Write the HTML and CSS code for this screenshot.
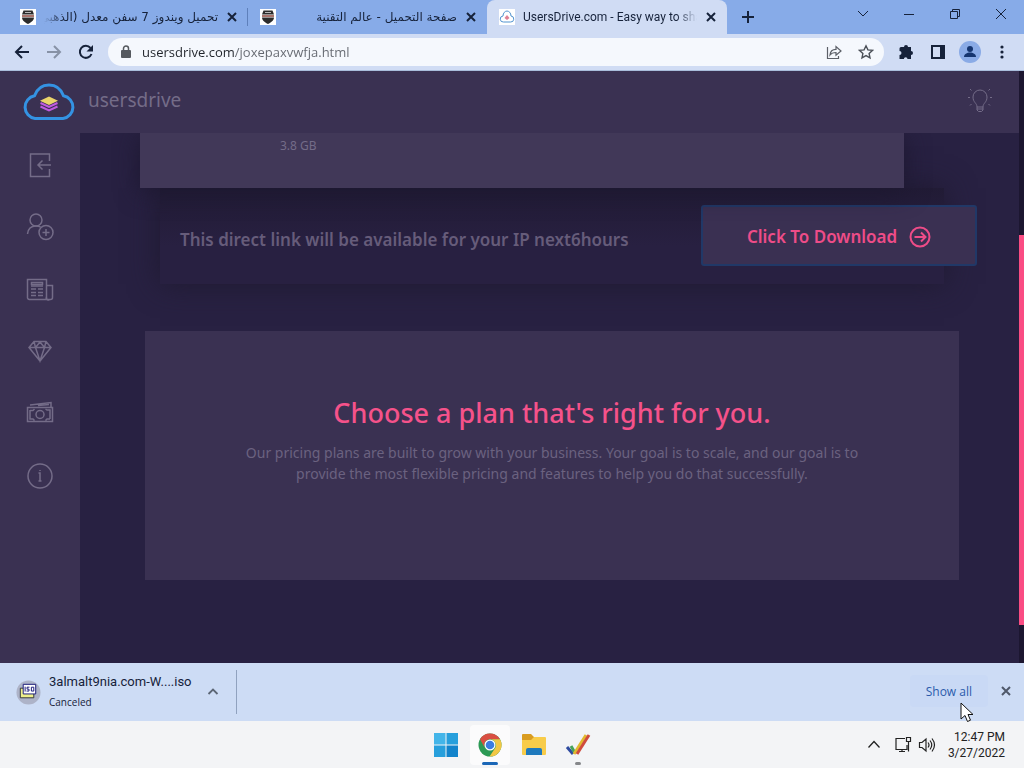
FILE: index.html
```html
<!DOCTYPE html>
<html lang="en">
<head>
<meta charset="utf-8">
<meta name="viewport" content="width=device-width, initial-scale=1">
<title>UsersDrive.com - Easy way to share</title>
<link rel="stylesheet" href="styles.css">
</head>
<body>
<svg class="defs" aria-hidden="true">
  <symbol id="badge" viewBox="0 0 16 16"><path fill="#fff" d="M0 0h16v16H0z"/><path fill="#2c2c2c" d="M3.500 1.500h9l1.500 4H2zM2 8.500h12c0 3-3 5-6 6.500-3-1.500-6-3.500-6-6.500z"/><path fill="#a8736c" d="M2 6h12v2H2z"/><path stroke="#b8b8b8" d="M5 3.500h6"/></symbol>
  <symbol id="cross" viewBox="0 0 12 12"><path fill="none" stroke="currentColor" stroke-width="2" d="m2 2 8 8M10 2l-8 8"/></symbol>
</svg>

<div class="tabstrip">
  <div class="tab">
    <svg class="i16"><use href="#badge"/></svg>
    <span class="tab-title rtl" dir="rtl" lang="ar">تحميل ويندوز 7 سفن معدل (الذهبي</span>
    <button class="plain" aria-label="Close tab"><svg class="i12"><use href="#cross"/></svg></button>
  </div>
  <div class="tab ruled">
    <svg class="i16"><use href="#badge"/></svg>
    <span class="tab-title rtl" dir="rtl" lang="ar">صفحة التحميل - عالم التقنية</span>
    <button class="plain" aria-label="Close tab"><svg class="i12"><use href="#cross"/></svg></button>
  </div>
  <div class="tab active">
    <svg class="i16" viewBox="0 0 16 16"><path fill="#fff" d="M0 0h16v16H0z"/><path fill="none" stroke="#5193cf" d="M4.500 13a3 3 0 0 1-.5-6c0-3 2-5 4-5s4 2 4 5a3 3 0 0 1-.5 6z"/><path fill="#df8195" d="m8 6 2.500 3L8 11 5.500 9z"/></svg>
    <span class="tab-title">UsersDrive.com - Easy way to sha</span>
    <button class="plain" aria-label="Close tab"><svg class="i12"><use href="#cross"/></svg></button>
  </div>
  <button class="plain new-tab" aria-label="New tab"><svg class="i12" viewBox="0 0 12 12"><path stroke="currentColor" stroke-width="2" d="M6 0v12M0 6h12"/></svg></button>
  <div class="window-buttons">
    <button class="plain" aria-label="Search tabs"><svg class="i12" viewBox="0 0 12 12"><path fill="none" stroke="currentColor" d="m1 3 5 5 5-5"/></svg></button>
    <button class="plain" aria-label="Minimize"><svg class="i12" viewBox="0 0 12 12"><path stroke="currentColor" d="M1 6.500h10"/></svg></button>
    <button class="plain" aria-label="Restore"><svg class="i12" viewBox="0 0 12 12"><path fill="none" stroke="currentColor" d="M1.500 3.500h7v7h-7zM3.500 3.500v-2h7v7h-2"/></svg></button>
    <button class="plain" aria-label="Close"><svg class="i12" viewBox="0 0 12 12"><path stroke="currentColor" d="m1 1 10 10M11 1 1 11"/></svg></button>
  </div>
</div>

<div class="toolbar">
  <button class="plain" aria-label="Back"><svg class="i16" viewBox="0 0 16 16"><path fill="none" stroke="currentColor" stroke-width="2" d="M15 8H2M8 2 2 8l6 6"/></svg></button>
  <button class="plain faded" aria-label="Forward"><svg class="i16" viewBox="0 0 16 16"><path fill="none" stroke="currentColor" stroke-width="2" d="M1 8h13M8 2l6 6-6 6"/></svg></button>
  <button class="plain" aria-label="Reload"><svg class="i16" viewBox="0 0 16 16"><path fill="none" stroke="currentColor" stroke-width="2" d="M13.500 10A6 6 0 1 1 12.500 4"/><path fill="currentColor" d="M15 1v6.500H8.500z"/></svg></button>
  <div class="omnibox">
    <svg class="lock" viewBox="0 0 10 14"><path fill="#55595f" d="M1 5h8a1 1 0 0 1 1 1v6a1 1 0 0 1-1 1H1a1 1 0 0 1-1-1V6a1 1 0 0 1 1-1z"/><path fill="none" stroke="#55595f" stroke-width="1.500" d="M2.500 6V3.500a2.500 2.500 0 0 1 5 0V6"/></svg>
    <input class="address" type="text" aria-label="Address" value="usersdrive.com/joxepaxvwfja.html">
    <button class="plain" aria-label="Share"><svg class="i16" viewBox="0 0 16 16"><path fill="none" stroke="#5c6068" stroke-width="1.200" d="M1.500 3v11.500h11V12M4 11c.3-4 2.500-5.700 6-5.700V2.500L15 7l-5 4.300V8.500C7.500 8.500 5.500 9 4 11z"/></svg></button>
    <button class="plain" aria-label="Bookmark"><svg class="i16" viewBox="0 0 16 16"><path fill="none" stroke="#4b5058" stroke-width="1.400" d="m8 1.800 1.900 4.100 4.500.5-3.300 3 .9 4.400L8 11.600l-4 2.200.9-4.400-3.300-3 4.500-.5z"/></svg></button>
  </div>
  <div class="actions">
    <button class="plain" aria-label="Extensions"><svg class="i16" viewBox="0 0 16 16"><path fill="currentColor" d="M3 3h3a2 2 0 1 1 4 0h3v4a2 2 0 1 1 0 4v4H9.500a1.800 1.800 0 1 0-3.600 0H1.500v-4a2 2 0 1 0 0-4V4.500A1.500 1.500 0 0 1 3 3z"/></svg></button>
    <button class="plain" aria-label="Side panel"><svg class="i16" viewBox="0 0 16 16"><path fill="currentColor" d="M1 1h14v14H1zM3 3v10h7V3z" fill-rule="evenodd"/></svg></button>
    <button class="plain avatar" aria-label="Profile"><svg class="i16" viewBox="0 0 16 16"><circle cx="8" cy="5" r="3"/><path d="M2 13c0-3 3-4.500 6-4.500s6 1.500 6 4.500z"/></svg></button>
    <button class="plain" aria-label="Menu"><svg class="i16" viewBox="0 0 16 16"><circle cx="8" cy="3" r="1.600"/><circle cx="8" cy="8" r="1.600"/><circle cx="8" cy="13" r="1.600"/></svg></button>
  </div>
</div>

<div class="viewport">
  <div class="site">
    <header class="site-header">
      <a class="brand" href="#">
        <svg class="logo" viewBox="0 0 54 38"><path fill="none" stroke="#3493e3" stroke-width="3" d="M13 35.500A11.500 11.500 0 0 1 12.500 12.800C15 6 20 2 27 2s12 4 14.500 10.800A11.500 11.500 0 0 1 41 35.500z"/><path fill="#ead46a" d="m27 13.500 9 4.200-9 4.300-9-4.300z"/><path fill="none" stroke="#c05be0" stroke-width="2" d="m18.500 20 8.500 4 8.500-4M18.500 23.500l8.500 4 8.500-4"/></svg>
        <span>usersdrive</span>
      </a>
      <button class="plain bulb" aria-label="Switch theme"><svg viewBox="0 0 26 26"><path d="M10 20c0-4-4-4.500-4-10a7 7 0 0 1 14 0c0 5.500-4 6-4 10zM10 20v3l1.500 1.500h3L16 23v-3M10 22h6M1 10.500h2M23 10.500h2M3 2l1.500 1.500M23 2l-1.500 1.500M3 18.500 4.500 17M23 18.500 21.500 17"/></svg></button>
    </header>
    <nav class="sidebar">
      <a href="#" aria-label="Login"><svg viewBox="0 0 28 28"><path d="M23.500 10V3h-19v22.500h19V18M25 14H12M16.500 9.500 12 14l4.500 4.500"/></svg></a>
      <a href="#" aria-label="Register"><svg viewBox="0 0 28 28"><circle cx="10" cy="7" r="6"/><path d="M1.500 21c.5-5 3-8 8.500-8 2 0 3.500.4 4.500 1M20 16v7M16.500 19.500h7"/><circle cx="20" cy="19.500" r="7"/></svg></a>
      <a href="#" aria-label="News"><svg viewBox="0 0 28 28"><path d="M20.500 24V4.500h-19V22a2 2 0 0 0 2 2.500h21a2 2 0 0 0 2-2V10.500h-6M5 11h12M5 14h5M12 14h5M5 17.500h5M12 17.500h5M5 20.500h5M12 20.500h5"/><path d="M5.500 7.500h11v2h-11zM20.500 22a2 2 0 0 0 3 2.500"/></svg></a>
      <a href="#" aria-label="Premium"><svg viewBox="0 0 28 28"><path d="M8 4.500h12l5 6L14 24 3 10.500zM3 10.500h22M8 4.500l1.500 6L14 24l4.500-13.500 1.500-6M9.500 10.500 14 5l4.500 5.500"/></svg></a>
      <a href="#" aria-label="Make money"><svg viewBox="0 0 28 28"><path d="M1.500 8.500h25v14h-25zM4 11.500h3L8.500 10M4 11v9h3l1.500 1.500M24 20h-3l-1.500 1.500M24 20v-9h-3L19.500 10M4 6l21-2.500v5M12 6.500l11-1"/><circle cx="14" cy="15.500" r="4"/></svg></a>
      <a href="#" aria-label="About"><svg viewBox="0 0 28 28"><circle cx="14" cy="15" r="12"/><path d="M12.500 12H14v8M12.500 20h3M14 9v1"/></svg></a>
    </nav>
    <main class="content">
      <section class="file-card"><p>3.8 GB</p></section>
      <section class="link-card">
        <p>This direct link will be available for your IP next6hours</p>
        <a class="download" href="#">Click To Download
          <svg viewBox="0 0 22 22"><circle cx="11" cy="11" r="9.500"/><path d="M5.500 11h11M12 6.500l4.500 4.500-4.500 4.500"/></svg>
        </a>
      </section>
      <section class="plans">
        <h1>Choose a plan that's right for you.</h1>
        <p>Our pricing plans are built to grow with your business. Your goal is to scale, and our goal is to provide the most flexible pricing and features to help you do that successfully.</p>
      </section>
    </main>
  </div>
  <div class="scroll-track"><div class="scroll-thumb"></div></div>
</div>

<div class="downloads">
  <div class="download-item">
    <svg class="iso" viewBox="0 0 26 26"><circle cx="13" cy="13" r="12.500" fill="#adb3c8"/><path fill="#eef08a" stroke="#33363a" d="M4.500 8.500h14v10h-14z"/><path fill="#fff" stroke="#181879" d="M7.500 4.500h13v10h-13z"/><path fill="none" stroke="#181879" d="M9.500 7v5M14 7.500h-2.500v2h2v2H11M16 7.500h2.500v4H16z"/></svg>
    <div class="file"><div class="file-name">3almalt9nia.com-W....iso</div><div class="file-state">Canceled</div></div>
    <button class="plain" aria-label="Download options"><svg class="i12" viewBox="0 0 12 12"><path fill="none" stroke="#5c6675" stroke-width="1.800" d="m1.500 8 4.500-4.500L10.500 8"/></svg></button>
  </div>
  <div class="download-tools">
    <button class="show-all">Show all
      <svg class="cursor" viewBox="0 0 14 21"><path fill="#fff" stroke="#111" d="M1 1v16l4-3.500 2.500 6 3-1.300-2.500-5.700h5z"/></svg>
    </button>
    <button class="plain dismiss" aria-label="Close downloads bar"><svg class="i12"><use href="#cross"/></svg></button>
  </div>
</div>

<div class="taskbar">
  <span></span>
  <div class="apps">
    <button class="app" aria-label="Start"><svg viewBox="0 0 26 26"><path fill="#43b5e9" d="M1 1h11.500v11.500H1z"/><path fill="#279fdc" d="M13.500 1H25v11.500H13.500zM1 13.500h11.500V25H1z"/><path fill="#1283cb" d="M13.500 13.500H25V25H13.500z"/></svg></button>
    <button class="app current" aria-label="Chrome"><svg viewBox="0 0 26 26"><circle cx="13" cy="13" r="11.500" fill="#2c9a55"/><path fill="#d94f42" d="M3 7.300a11.500 11.500 0 0 1 20 0H13a6 6 0 0 0-5.200 8.700z"/><path fill="#f2c744" d="M23 7.300A11.500 11.500 0 0 1 12.500 24.500l5.700-8.500A6 6 0 0 0 13 7.300z"/><circle cx="13" cy="13" r="5.500" fill="#fff"/><circle cx="13" cy="13" r="4.300" fill="#3b7de0"/></svg></button>
    <button class="app" aria-label="File Explorer"><svg viewBox="0 0 26 26"><path fill="#d99c20" d="M1 3a1 1 0 0 1 1-1h8l3 3h11v6H1z"/><path fill="#f8cc4a" d="M1 8h9l3-3h11a1 1 0 0 1 1 1v16a1 1 0 0 1-1 1H2a1 1 0 0 1-1-1z"/><path fill="#1e79bd" d="M5 23v-5a2 2 0 0 1 2-2h12a2 2 0 0 1 2 2v5z"/></svg></button>
    <button class="app running" aria-label="Notes"><svg viewBox="0 0 26 26"><path fill="none" stroke="#2e4aa0" stroke-width="3" d="m2 15 6 7"/><path fill="none" stroke="#46a35a" stroke-width="3" d="m6 14 4 7"/><path fill="none" stroke="#e2b92f" stroke-width="3" d="m9 22 12-19"/><path fill="none" stroke="#cf4b3d" stroke-width="3" d="m12 22 12-19"/></svg></button>
  </div>
  <div class="tray">
    <button class="plain" aria-label="Hidden icons"><svg class="i16" viewBox="0 0 16 16"><path fill="none" stroke="currentColor" stroke-width="1.300" d="m2.500 10.500 5.500-6 5.500 6"/></svg></button>
    <div class="status">
      <svg class="i18" viewBox="0 0 18 18"><path fill="none" stroke="currentColor" stroke-width="1.200" d="M11 2.500H2v11h11V9M5 15.500h6M8 13.500v2M12.500 1.500h4v4h-4zM14.500 5.500v10"/></svg>
      <svg class="i18" viewBox="0 0 18 18"><path fill="none" stroke="currentColor" stroke-width="1.200" d="M1.500 6.500H4L8 3v12l-4-3.500H1.500zM10 6.500q2 2.500 0 5M12 4.500q3.500 4.500 0 9M14 2.500q5 6.500 0 13"/></svg>
    </div>
    <div class="clock"><div>12:47 PM</div><div>3/27/2022</div></div>
  </div>
</div>
</body>
</html>
```

FILE: styles.css
```css
* { box-sizing: border-box; }
body {
  margin: 0;
  min-height: 100vh;
  display: flex;
  flex-direction: column;
  font-family: "Open Sans", "DejaVu Sans", sans-serif;
  font-size: 12px;
  color: #16223a;
}
p, h1 { margin: 0; }
a { color: inherit; text-decoration: none; }
svg { display: block; flex: none; }
.defs { width: 0; height: 0; position: absolute; }
.plain, .show-all, .app {
  border: 0; padding: 0; background: none; color: inherit; font: inherit;
  display: grid; place-items: center;
}
.i12 { width: 12px; height: 12px; }
.i16 { width: 16px; height: 16px; }
.i18 { width: 18px; height: 18px; }
.i16, .i12 { fill: currentColor; }

/* Browser tabs */
.tabstrip { height: 34px; display: flex; align-items: stretch; padding-left: 8px; background: #87abe8; }
.tab { flex: 0 1 240px; min-width: 0; display: flex; align-items: center; gap: 8px; padding: 0 10px 0 12px; }
.tab.ruled { border-left: 1px solid #5e80bb; margin: 8px 0; margin-left: -1px; }
.tab.active { background: #d0dcf4; border-radius: 8px 8px 0 0; }
.tab-title {
  flex: 1; min-width: 0; overflow: hidden; white-space: nowrap; line-height: 20px;
  font-family: Roboto, sans-serif;
  mask-image: linear-gradient(to right, #000 88%, transparent);
}
.tab-title.rtl { font-family: "DejaVu Sans", sans-serif; mask-image: linear-gradient(to left, #000 88%, transparent); }
.new-tab { width: 42px; }
.window-buttons { display: flex; margin-left: auto; }
.window-buttons button { width: 46px; padding-bottom: 6px; }

.toolbar { height: 37px; display: flex; align-items: center; gap: 16px; padding: 0 14px; background: #d0dcf4; border-bottom: 1px solid #a9bddb; }
.faded { color: #8792a6; }
.omnibox { flex: 1; height: 28px; margin-left: -2px; padding: 0 10px 0 13px; display: flex; align-items: center; gap: 16px; border-radius: 14px; background: #f5f8fd; }
.lock { width: 10px; height: 14px; }
.address {
  flex: 1; min-width: 0; border: 0; padding: 0; margin-left: -5px; font: inherit; font-size: 13px; line-height: 20px;
  color: transparent; caret-color: #20242b;
  background: linear-gradient(to right, #20242b 93px, #63676f 93px);
  -webkit-background-clip: text; background-clip: text;
}
.actions { display: flex; gap: 16px; align-items: center; margin-left: -2px; }
.avatar { width: 22px; height: 22px; margin: 0 -3px; border-radius: 50%; background: #8aabe6; color: #15356f; }

/* Site */
.viewport { flex: 1; display: flex; background: #1c1630; font-family: "Noto Sans", sans-serif; color: #746c88; }
.site { flex: 1; min-width: 0; display: grid; grid-template: 62px 1fr / 80px 1fr; background: #282142; }
.site-header { grid-column: 1 / -1; z-index: 1; display: flex; align-items: center; justify-content: space-between; padding: 0 26px 0 22px; background: #3a3152; }
.brand { display: flex; align-items: center; gap: 12px; font-size: 19px; line-height: 24px; }
.brand span, .bulb { padding-bottom: 4px; }
.logo { width: 54px; height: 38px; }
.bulb svg, .sidebar svg, .download svg { fill: none; stroke: currentColor; stroke-width: 1.5; }
.bulb svg { width: 26px; height: 26px; stroke-width: 1; }
.sidebar { padding-top: 1px; background: #3a3152; }
.sidebar a { height: 62px; display: grid; place-items: center; }
.sidebar svg { width: 28px; height: 28px; }
.content { padding: 0 60px 83px; }
.file-card { height: 55px; margin-right: 55px; padding: 3px 140px; background: #413858; box-shadow: 0 4px 24px #1d1830; position: relative; font-size: 12px; line-height: 20px; }
.link-card {
  display: flex; align-items: center; justify-content: space-between; gap: 16px;
  margin: 0 15px 47px 20px; padding: 17px 0 18px 20px;
  background: linear-gradient(#211b35, #282041 60%);
  box-shadow: 0 0 28px #1f1a30; font-size: 17px; line-height: 24px; font-weight: 600; color: #665c7a;
}
.link-card p { padding-top: 8px; }
.download {
  flex: none; display: flex; align-items: center; justify-content: center; gap: 12px;
  width: 276px; height: 61px; margin-right: -33px; padding-top: 2px;
  border: 2px solid #213867; border-radius: 3px; background: #3a3052; color: #ee4c88; white-space: nowrap;
}
.download svg { width: 22px; height: 22px; stroke-width: 2; }
.plans { margin-left: 5px; padding: 64px 96px 96px; background: #3a3152; text-align: center; }
.plans h1 { font-size: 27px; line-height: 36px; font-weight: 500; color: #f5528a; }
.plans p { margin-top: 11px; font-size: 14px; line-height: 21px; color: #6b6280; }
.scroll-track { width: 5px; display: grid; grid-template-rows: 164fr 390fr 38fr; }
.scroll-thumb { grid-row: 2; background: #fa4c83; }

/* Downloads bar */
.downloads { height: 58px; display: flex; align-items: center; justify-content: space-between; padding: 0 12px 0 16px; background: #cddcf5; }
.download-item { display: flex; align-items: center; gap: 8px; height: 44px; padding-right: 17px; border-right: 1px solid #90a2bf; }
.iso { width: 25px; height: 25px; }
.file { width: 150px; }
.file-name { font-family: Roboto, sans-serif; font-size: 13px; line-height: 20px; }
.file-state { font-size: 10px; line-height: 20px; }
.download-tools { display: flex; align-items: center; gap: 12px; padding-bottom: 2px; }
.show-all { position: relative; height: 32px; padding: 0 16px; border-radius: 4px; background: #c9d9f5; color: #2b5bab; font-weight: 500; }
.cursor { position: absolute; left: 50px; top: 27px; width: 14px; height: 21px; }
.dismiss { color: #4f5869; }

/* Taskbar */
.taskbar { height: 47px; display: grid; grid-template-columns: 1fr auto 1fr; align-items: center; background: #f3f4f6; color: #222; }
.apps { display: flex; gap: 4px; }
.app { width: 40px; height: 40px; border-radius: 4px; position: relative; }
.app svg { width: 26px; height: 26px; }
.app.current { background: #fbfbfc; }
.current::after, .running::after { content: ""; position: absolute; bottom: 0; width: 6px; height: 3px; border-radius: 2px; background: #85878a; }
.current::after { width: 16px; background: #1b67b7; }
.tray { display: flex; justify-content: flex-end; align-items: center; gap: 12px; padding-right: 19px; }
.status { display: flex; gap: 6px; }
.clock { text-align: right; font-family: Roboto, sans-serif; line-height: 16px; }
```
